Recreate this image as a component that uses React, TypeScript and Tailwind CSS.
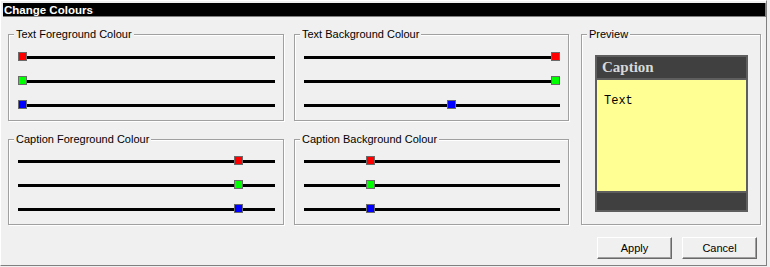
import React from "react";

const FONT = { fontFamily: '"Liberation Sans", Arial, sans-serif' };

type Rgb = [number, number, number];

function Slider({ value, color }: { value: number; color: string }) {
  const frac = value / 255;
  return (
    <div className="relative h-[24px] flex items-center">
      <div className="h-[3px] w-full bg-black" />
      <div
        className="absolute top-[7px] w-[9px] h-[9px] border border-[#6a6a6a]"
        style={{ left: `calc(${frac} * (100% - 9px))`, backgroundColor: color }}
      />
    </div>
  );
}

function Group({
  label,
  rgb,
  className,
}: {
  label: string;
  rgb: Rgb;
  className: string;
}) {
  return (
    <div
      className={`relative border border-[#a0a0a0] shadow-[inset_1px_1px_0_#ffffff,1px_1px_0_#ffffff] pl-[9px] pr-[8px] ${className}`}
    >
      <span className="absolute -top-[8px] left-[5px] px-[2px] bg-[#f0f0f0] text-[11px] leading-[14px] text-black whitespace-nowrap">
        {label}
      </span>
      <Slider value={rgb[0]} color="#ff0000" />
      <Slider value={rgb[1]} color="#00ff00" />
      <Slider value={rgb[2]} color="#0000ff" />
    </div>
  );
}

function Button({ children }: { children: React.ReactNode }) {
  return (
    <button className="w-[75px] h-[22px] bg-[#f0f0f0] border border-t-white border-l-white border-r-[#696969] border-b-[#696969] shadow-[inset_-1px_-1px_0_#a0a0a0] text-[11px] text-black leading-none">
      {children}
    </button>
  );
}

export default function App() {
  return (
    <div className="w-[770px] h-[267px] bg-[#f0f0f0] overflow-hidden" style={FONT}>
      <div className="w-[767px] h-[266px] border-l border-t border-l-white border-t-white border-r border-b border-r-[#808080] border-b-[#808080] flex flex-col relative">
        <div className="ml-[2px] mt-[2px] h-[14px] bg-black border-r border-b border-[#808080] flex items-center pl-[1px]">
          <span className="text-white font-bold text-[11.5px] leading-[14px]">Change Colours</span>
        </div>
        <div className="flex pl-[7px] mt-[17px]">
          <div className="grid grid-cols-[276px_275px] gap-x-[10px] gap-y-[18px]">
            <Group label="Text Foreground Colour" rgb={[0, 0, 0]} className="pt-[10px] pb-[3px]" />
            <Group label="Text Background Colour" rgb={[255, 255, 148]} className="pt-[10px] pb-[3px]" />
            <Group label="Caption Foreground Colour" rgb={[222, 222, 222]} className="pt-[9px] pb-[3px]" />
            <Group label="Caption Background Colour" rgb={[64, 64, 64]} className="pt-[9px] pb-[3px]" />
          </div>
          <div className="relative ml-[12px] w-[180px] border border-[#a0a0a0] shadow-[inset_1px_1px_0_#ffffff,1px_1px_0_#ffffff] pl-[13px] pt-[20px]">
            <span className="absolute -top-[8px] left-[5px] px-[2px] bg-[#f0f0f0] text-[11px] leading-[14px] text-black">
              Preview
            </span>
            <div className="w-[153px] h-[157px] border-2 border-[#5e5e5e] flex flex-col">
              <div
                className="h-[21px] bg-[#404040] text-[#d8d8d8] font-bold text-[15px] leading-[21px] pl-[5px]"
                style={{ fontFamily: '"Liberation Serif", "Times New Roman", serif' }}
              >
                Caption
              </div>
              <div
                className="flex-1 bg-[#ffff94] border-t-2 border-[#5e5e5e] text-[12px] leading-[14px] text-black pl-[7px] pt-[14px]"
                style={{ fontFamily: '"Liberation Mono", "Courier New", monospace' }}
              >
                Text
              </div>
              <div className="h-[19px] bg-[#404040] border-t-2 border-[#5e5e5e]" />
            </div>
          </div>
        </div>
        <div className="flex justify-end gap-[10px] pr-[9px] mt-[12px]">
          <Button>Apply</Button>
          <Button>Cancel</Button>
        </div>
      </div>
    </div>
  );
}
